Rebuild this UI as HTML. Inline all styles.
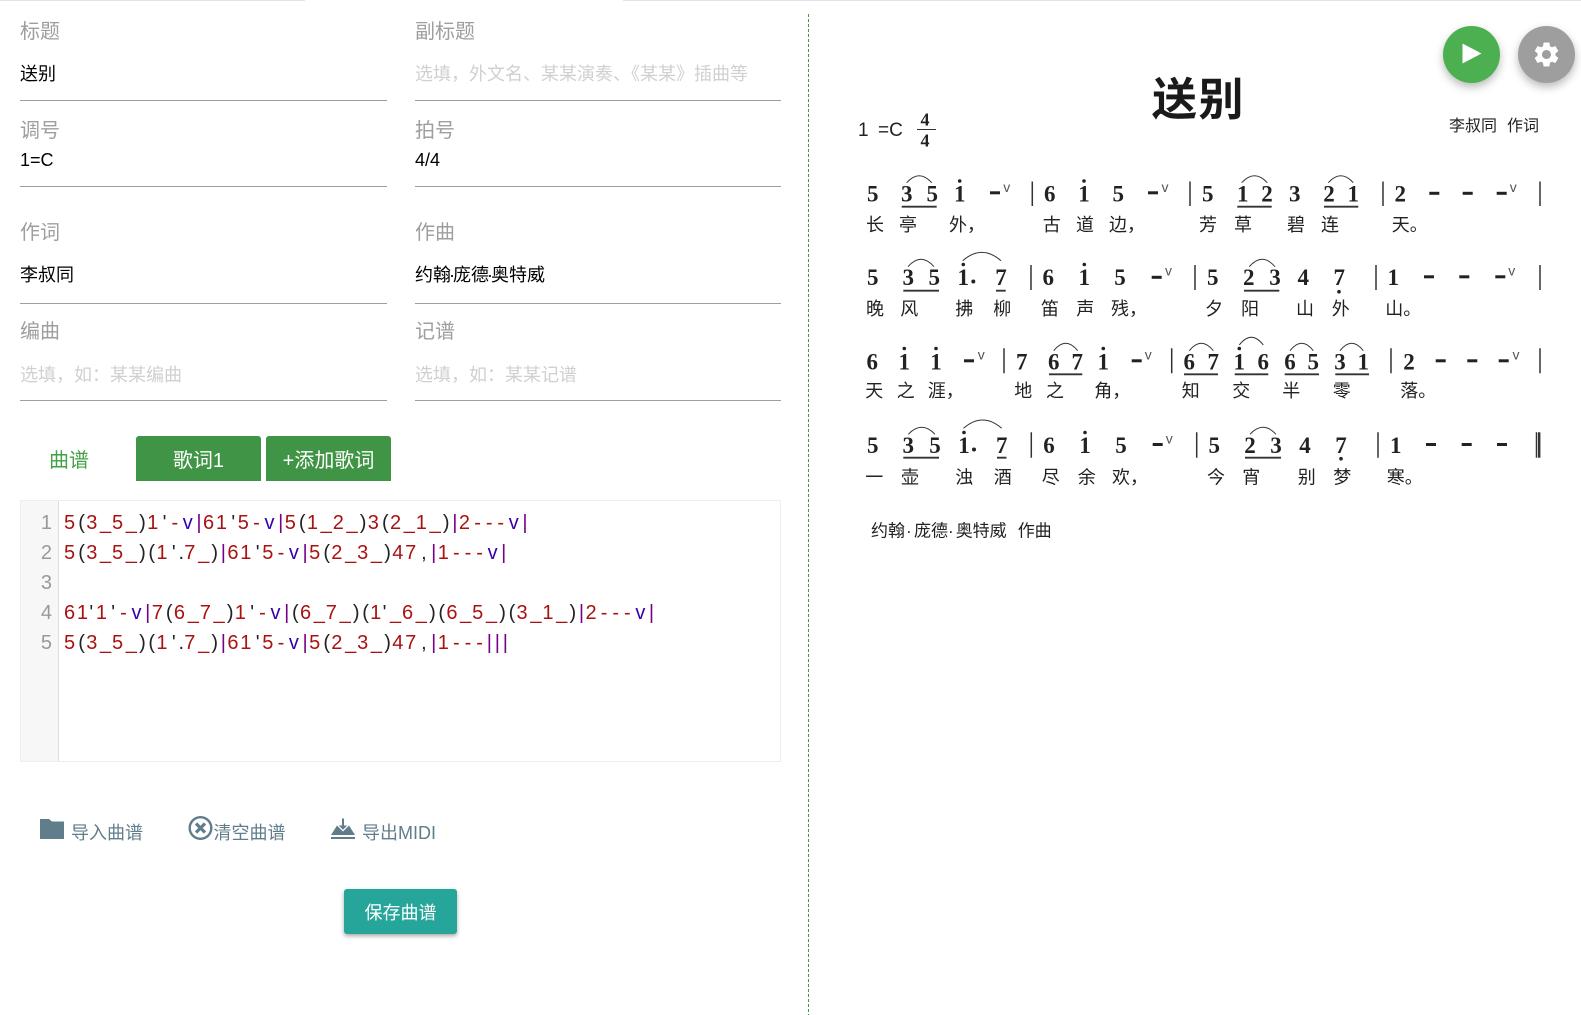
<!DOCTYPE html>
<html lang="zh">
<head>
<meta charset="utf-8">
<title>送别</title>
<style>
html,body{margin:0;padding:0;background:#fff;}
body{width:1581px;height:1015px;position:relative;overflow:hidden;font-family:"Liberation Sans","Noto Sans CJK SC",sans-serif;}
.t{position:absolute;white-space:nowrap;line-height:30px;height:30px;}
.l{font-size:20px;color:#9e9e9e;}
.v{font-size:18px;color:#000;}
.p{font-size:18px;color:#d0d0d0;}
.h{position:absolute;height:1px;background:#9e9e9e;width:367px;}
.a{left:20px;}
.b{left:415px;}
.h.b{width:366px;}
.topline{position:absolute;top:0;height:1px;background:#e0e3ea;}
.tab{position:absolute;top:436px;height:45px;width:125px;background:#3f9445;color:#fff;font-size:20px;line-height:50px;text-align:center;border-radius:3px 3px 0 0;}
#ed{position:absolute;left:20px;top:500px;width:759px;height:260px;border:1px solid #eee;}
#gut{position:absolute;left:0;top:0;width:37px;height:260px;background:#f7f7f7;border-right:1px solid #ddd;}
.n{position:absolute;left:0;width:31px;text-align:right;color:#999;font:20px/30px "Liberation Sans",sans-serif;}
.c{position:absolute;left:43px;font:20px/30px "Liberation Sans",sans-serif;color:#a11;white-space:pre;letter-spacing:1.78px;}
.c i,.c b,.c u,.c s,.c em,.c kbd,.c small,.c a{display:inline-block;text-align:center;font:inherit;letter-spacing:0;text-decoration:none;font-style:normal;font-weight:normal;}
.c i{width:9.3px;color:#222;}
.c s{width:12.9px;color:#a11;}
.c em{width:11.6px;color:#a11;}
.c b{width:14.4px;color:#30a;}
.c u{width:8px;color:#708;}
.c kbd{width:9px;color:#222;}
.c small{width:6px;color:#222;}
.c a{width:11.7px;color:#222;}
.act{font-size:18px;color:#607d8b;}
#save{position:absolute;left:344px;top:889px;width:113px;height:45px;background:#26a69a;color:#fff;font-size:18px;line-height:49px;text-align:center;border-radius:3px;box-shadow:0 2px 4px rgba(0,0,0,.35);}
#div{position:absolute;left:808px;top:14px;width:1px;height:1001px;background:repeating-linear-gradient(to bottom,#43953f 0,#43953f 3px,transparent 3px,transparent 5px);}
.fab{position:absolute;top:26px;width:57px;height:57px;border-radius:50%;box-shadow:0 4px 9px rgba(0,0,0,.28);}
svg.s{position:absolute;left:0;top:0;}
.d{font:bold 23px "Liberation Serif",serif;fill:#222;text-anchor:middle;}
.y{font:18px "Noto Sans CJK SC",sans-serif;fill:#222;text-anchor:middle;}
.w{font:14px "Liberation Sans",sans-serif;fill:#555;text-anchor:middle;}
</style>
</head>
<body>
<div class="topline" style="left:0;width:305px"></div>
<div class="topline" style="left:623px;width:958px"></div>

<div class="t l a" style="top:17px">标题</div>
<div class="t l b" style="top:17px">副标题</div>
<div class="t v a" style="top:59px">送别</div>
<div class="t p b" style="top:58.500px">选填&#xFF0C;外文名、某某演奏、《某某》插曲等</div>
<div class="h a" style="top:100px"></div>
<div class="h b" style="top:100px"></div>

<div class="t l a" style="top:116px">调号</div>
<div class="t l b" style="top:116px">拍号</div>
<div class="t v a" style="top:145px">1=C</div>
<div class="t v b" style="top:145px">4/4</div>
<div class="h a" style="top:186px"></div>
<div class="h b" style="top:186px"></div>

<div class="t l a" style="top:218px">作词</div>
<div class="t l b" style="top:218px">作曲</div>
<div class="t v a" style="top:260px">李叔同</div>
<div class="t v b" style="top:260px">约翰<span style="margin:0 -2px">·</span>庞德<span style="margin:0 -2px">·</span>奥特威</div>
<div class="h a" style="top:303px"></div>
<div class="h b" style="top:303px"></div>

<div class="t l a" style="top:317px">编曲</div>
<div class="t l b" style="top:317px">记谱</div>
<div class="t p a" style="top:360px">选填&#xFF0C;如&#xFF1A;某某编曲</div>
<div class="t p b" style="top:360px">选填&#xFF0C;如&#xFF1A;某某记谱</div>
<div class="h a" style="top:400px"></div>
<div class="h b" style="top:400px"></div>

<div class="t" style="left:49px;top:446px;font-size:20px;color:#43a047">曲谱</div>
<div class="tab" style="left:136px">歌词1</div>
<div class="tab" style="left:266px">+添加歌词</div>

<div id="ed">
<div id="gut"></div>
<div class="n" style="top:7px">1</div>
<div class="n" style="top:37px">2</div>
<div class="n" style="top:67px">3</div>
<div class="n" style="top:97px">4</div>
<div class="n" style="top:127px">5</div>
<div class="c" style="top:7px">5<i>(</i>3<s>_</s>5<s>_</s><i>)</i>1<kbd>'</kbd><em>-</em><b>v</b><u>|</u>61<kbd>'</kbd>5<em>-</em><b>v</b><u>|</u>5<i>(</i>1<s>_</s>2<s>_</s><i>)</i>3<i>(</i>2<s>_</s>1<s>_</s><i>)</i><u>|</u>2<em>-</em><em>-</em><em>-</em><b>v</b><u>|</u></div>
<div class="c" style="top:37px">5<i>(</i>3<s>_</s>5<s>_</s><i>)</i><i>(</i>1<kbd>'</kbd><small>.</small>7<s>_</s><i>)</i><u>|</u>61<kbd>'</kbd>5<em>-</em><b>v</b><u>|</u>5<i>(</i>2<s>_</s>3<s>_</s><i>)</i>47<a>,</a><u>|</u>1<em>-</em><em>-</em><em>-</em><b>v</b><u>|</u></div>
<div class="c" style="top:97px">61<kbd style="margin-left:-3px">'</kbd>1<kbd>'</kbd><em>-</em><b>v</b><u>|</u>7<i>(</i>6<s>_</s>7<s>_</s><i>)</i>1<kbd>'</kbd><em>-</em><b>v</b><u>|</u><i>(</i>6<s>_</s>7<s>_</s><i>)</i><i>(</i>1<kbd style="margin-left:-3px">'</kbd><s>_</s>6<s>_</s><i>)</i><i>(</i>6<s>_</s>5<s>_</s><i>)</i><i>(</i>3<s>_</s>1<s>_</s><i>)</i><u>|</u>2<em>-</em><em>-</em><em>-</em><b>v</b><u>|</u></div>
<div class="c" style="top:127px">5<i>(</i>3<s>_</s>5<s>_</s><i>)</i><i>(</i>1<kbd>'</kbd><small>.</small>7<s>_</s><i>)</i><u>|</u>61<kbd>'</kbd>5<em>-</em><b>v</b><u>|</u>5<i>(</i>2<s>_</s>3<s>_</s><i>)</i>47<a>,</a><u>|</u>1<em>-</em><em>-</em><em>-</em><u>|</u><u>|</u><u>|</u></div>
</div>

<svg class="s" width="500" height="860" viewBox="0 0 500 860" style="pointer-events:none">
<path fill="#607d8b" d="M40 819h9l3 2.500h12V839H40z"/>
<circle cx="200.500" cy="828" r="10.800" fill="none" stroke="#607d8b" stroke-width="2.400"/>
<path d="M196 823.500l9 9M205 823.500l-9 9" stroke="#607d8b" stroke-width="3.200" fill="none"/>
<path fill="#607d8b" d="M331 835l6-9.500 6 6 6-6 6 9.500zM331 837h24v2h-24z"/>
<path fill="#607d8b" stroke="#fff" stroke-width="1" d="M341.500 818h3v7h4l-5.500 5.500-5.500-5.500h4z"/>
</svg>
<div class="t act" style="left:71px;top:818px">导入曲谱</div>
<div class="t act" style="left:213.500px;top:818px">清空曲谱</div>
<div class="t act" style="left:362px;top:818px">导出MIDI</div>
<div id="save">保存曲谱</div>

<div id="div"></div>

<div class="t" style="left:1152px;top:75px;font-size:45px;letter-spacing:1.500px;line-height:50px;height:50px;font-weight:bold;color:#1a1a1a">送别</div>
<div class="t" style="left:1449px;top:112px;font-size:16px;color:#222">李叔同</div>
<div class="t" style="left:1507px;top:112px;font-size:16px;color:#222">作词</div>

<div class="fab" style="left:1443px;background:#4caf50">
<svg width="57" height="57" viewBox="0 0 57 57" style="display:block"><path fill="#fff" d="M19.500 17.500l19 10-19 10z"/></svg>
</div>
<div class="fab" style="left:1518px;background:#9e9e9e">
<svg width="57" height="57" viewBox="0 0 57 57" style="display:block"><g transform="translate(13.500 13.500) scale(1.25)"><path fill="#fff" d="M19.140 12.940c.04-.3.06-.61.06-.94 0-.32-.02-.64-.07-.94l2.030-1.580c.18-.14.23-.41.12-.61l-1.920-3.320c-.12-.22-.37-.29-.59-.22l-2.390.96c-.5-.38-1.030-.7-1.620-.94l-.36-2.540c-.04-.24-.24-.41-.48-.41h-3.840c-.24 0-.43.17-.47.41l-.36 2.540c-.59.24-1.130.57-1.620.94l-2.390-.96c-.22-.08-.47 0-.59.22L2.740 8.870c-.12.21-.08.47.12.61l2.030 1.580c-.05.3-.09.63-.09.94s.02.64.07.94l-2.030 1.580c-.18.14-.23.41-.12.61l1.920 3.320c.12.22.37.29.59.22l2.390-.96c.5.38 1.030.7 1.620.94l.36 2.540c.05.24.24.41.48.41h3.840c.24 0 .44-.17.47-.41l.36-2.540c.59-.24 1.130-.56 1.620-.94l2.390.96c.22.08.47 0 .59-.22l1.920-3.320c.12-.22.07-.47-.12-.61l-2.010-1.580zM12 15.600c-1.980 0-3.600-1.620-3.600-3.600s1.620-3.600 3.600-3.600 3.600 1.620 3.600 3.600-1.620 3.600-3.600 3.600z"/></g></svg>
</div>

<svg class="s" width="1581" height="1015" viewBox="0 0 1581 1015">
<!-- key / time -->
<text x="858" y="136" style="font:19px 'Liberation Sans',sans-serif" fill="#222">1</text>
<text x="878" y="136" style="font:19px 'Liberation Sans',sans-serif" fill="#222">=C</text>
<text class="d" x="925" y="125.500" style="font-size:18px">4</text>
<text class="d" x="925" y="146.500" style="font-size:18px">4</text>
<rect x="917" y="129" width="19" height="1" fill="#333"/>

<!-- notes -->
<text class="d" y="201.700" x="872.700 906.700 932.300 959.700 1049.700 1084 1118.300 1207.700 1242.700 1267 1294.700 1329 1353.300 1400.300">53516155123212</text>
<text class="d" y="285" x="872.700 908.300 934.300 963.300 1001 1048.300 1084.300 1120 1212.700 1248.700 1275 1303.300 1339.300 1393.300">53517615523471</text>
<text class="d" y="369.300" x="872.300 904.300 936 1021.700 1053.700 1077.300 1103.300 1189.300 1213.300 1239.300 1263.300 1290 1313.300 1340 1363.300 1409">6117671671665312</text>
<text class="d" y="453" x="872.700 908.300 935 964 1001.700 1049 1085 1121 1214.300 1250 1276 1305 1341 1395.700">53517615523471</text>

<!-- dots -->
<g fill="#222">
<circle cx="959.700" cy="181" r="1.800"/><circle cx="1084" cy="181" r="1.800"/>
<circle cx="963.300" cy="264.500" r="1.800"/><circle cx="1084.300" cy="264.500" r="1.800"/><circle cx="973.300" cy="281.500" r="2"/><circle cx="1339" cy="291.700" r="1.800"/>
<circle cx="904.300" cy="348.500" r="1.800"/><circle cx="936" cy="348.500" r="1.800"/><circle cx="1103.300" cy="348.500" r="1.800"/><circle cx="1239.300" cy="348.500" r="1.800"/>
<circle cx="964" cy="432.500" r="1.800"/><circle cx="1085" cy="432.500" r="1.800"/><circle cx="974" cy="449.500" r="2"/><circle cx="1341" cy="458.700" r="1.800"/>
</g>

<!-- dashes -->
<g fill="#222">
<rect x="990" y="191.300" width="10" height="3"/><rect x="1148" y="191.300" width="10" height="3"/><rect x="1429.300" y="191.800" width="10" height="3"/><rect x="1462.700" y="191.800" width="10" height="3"/><rect x="1496.700" y="191.800" width="10" height="3"/>
<rect x="1151.700" y="275.800" width="10" height="3"/><rect x="1424" y="275.300" width="10" height="3"/><rect x="1459.300" y="275.300" width="10" height="3"/><rect x="1495.300" y="275.300" width="10" height="3"/>
<rect x="964" y="359.300" width="10" height="3"/><rect x="1131.700" y="359.300" width="10" height="3"/><rect x="1435.700" y="359.300" width="10" height="3"/><rect x="1467.300" y="359.300" width="10" height="3"/><rect x="1498.700" y="359.300" width="10" height="3"/>
<rect x="1152.700" y="443" width="10" height="3"/><rect x="1426" y="443" width="10" height="3"/><rect x="1461.700" y="443" width="10" height="3"/><rect x="1497" y="443" width="10" height="3"/>
</g>

<!-- breath marks -->
<text class="w" y="192" x="1006.700 1165 1513.300">vvv</text>
<text class="w" y="275.500" x="1168.500 1511.700">vv</text>
<text class="w" y="359.500" x="981.300 1148.300 1516">vvv</text>
<text class="w" y="443.500" x="1169.300">v</text>

<!-- bars -->
<g stroke="#333" stroke-width="1.500" fill="none">
<path d="M1032.300 181.500V206M1190 181.500V206M1383 181.500V206M1540 181.500V206"/>
<path d="M1031 265V290M1195 265V290M1376 265V290M1540 265V290"/>
<path d="M1004 348.300V373.300M1171.700 348.300V373.300M1391 348.300V373.300M1540 348.300V373.300"/>
<path d="M1031.300 432.300V457.700M1196.700 432.300V457.700M1378 432.300V457.700M1536.500 432.300V457.700"/>
</g>
<rect x="1538" y="432.300" width="2.400" height="25.400" fill="#333"/>

<!-- underlines -->
<g stroke="#333" stroke-width="1.800" fill="none">
<path d="M901.700 206.700H936.700M1237.300 206.700H1271.700M1324 206.700H1358.300"/>
<path d="M903.300 290.700H939M996 290.700H1005.700M1244 290.700H1279.300"/>
<path d="M1049 374.300H1082.300M1184 374.300H1218M1234.700 374.300H1268.300M1284.700 374.300H1319M1335.300 374.300H1369"/>
<path d="M903.300 457.700H939M997 457.700H1006.500M1245 457.700H1281"/>
</g>

<!-- slurs -->
<g stroke="#333" stroke-width="1" fill="none">
<path d="M906.700 182.700Q919.200 168.700 931.700 182.700M1241.700 182.700Q1254.500 168.700 1267.300 182.700M1328.300 182.700Q1340.800 168.700 1353.300 182.700"/>
<path d="M908 266.700Q921 251.900 934 266.700M962.700 260.700Q981.800 244 1001 260.700M1249.300 266.700Q1262.200 251.900 1275 266.700"/>
<path d="M1053.700 350.700Q1065.700 335.900 1077.700 350.700M1189.300 350.700Q1201.300 335.900 1213.300 350.700M1239.300 345Q1251.300 329.600 1263.300 345M1290 350.700Q1301.700 335.900 1313.300 350.700M1340 350.700Q1351.700 335.900 1363.300 350.700"/>
<path d="M908.300 434.300Q921.700 420.300 935 434.300M963.500 428.300Q982.600 411.700 1001.700 428.300M1250 434.300Q1263 420.300 1276 434.300"/>
</g>

<!-- lyrics -->
<text class="y" y="230.800" x="875 908 958 976 1051.700 1085 1118 1136 1208 1243 1296 1330 1400.700 1418.700">长亭外&#xFF0C;古道边&#xFF0C;芳草碧连天。</text>
<text class="y" y="315.100" x="875 909.300 964.300 1002.300 1050 1085.300 1120 1138 1214 1250 1305 1340.700 1394.300 1412.300">晚风拂柳笛声残&#xFF0C;夕阳山外山。</text>
<text class="y" y="397.200" x="874.300 905.700 936.700 954.700 1023.300 1055 1103.300 1121.300 1190.700 1241.300 1291.300 1341.700 1409.300 1427.300">天之涯&#xFF0C;地之角&#xFF0C;知交半零落。</text>
<text class="y" y="483.300" x="874.300 910 964.300 1002.700 1050.700 1086.700 1121 1139 1216 1251.300 1306.700 1342.300 1395.700 1413.700">一壶浊酒尽余欢&#xFF0C;今宵别梦寒。</text>

<!-- composer -->
<text y="536.500" style="font:17px 'Liberation Sans','Noto Sans CJK SC',sans-serif" fill="#222"><tspan x="871">约翰</tspan><tspan x="906">·</tspan><tspan x="914">庞德</tspan><tspan x="948">·</tspan><tspan x="955.700">奥特威</tspan><tspan x="1017.700">作曲</tspan></text>
</svg>
</body>
</html>
